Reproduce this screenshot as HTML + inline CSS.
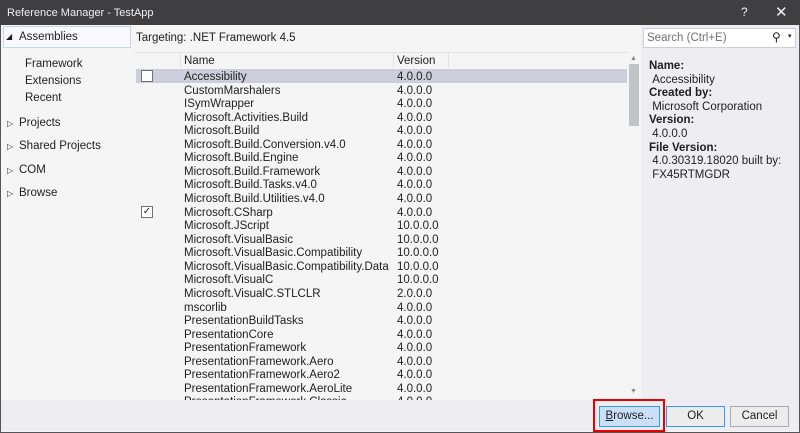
<!DOCTYPE html>
<html><head><style>
*{margin:0;padding:0;box-sizing:border-box}
body{width:800px;height:433px;overflow:hidden;background:#f5f5f5;font-family:"Liberation Sans",sans-serif;font-size:11.5px;color:#1e1e1e;position:relative}
.a{position:absolute;white-space:nowrap}
#title{left:0;top:0;width:800px;height:25px;background:#3f3f41;color:#f0f0f0;}
#frame{left:0;top:25px;width:800px;height:408px;border:1px solid #555;border-top:none}
.row{position:absolute;left:136px;width:492px;height:14px;line-height:14px}
.row .n{position:absolute;left:48px;top:1px}
.row .v{position:absolute;left:261px;top:1px}
</style></head><body>
<div class="a" id="title"><span class="a" style="left:7px;top:7px;font-size:11px">Reference Manager - TestApp</span>
<span class="a" style="left:741px;top:5px;font-size:12px">?</span>
<span class="a" style="left:775px;top:3px;font-size:15px">✕</span></div>
<div class="a" id="frame"></div>
<!-- left panel -->
<div class="a" style="left:3px;top:26px;width:128px;height:22px;border:1px solid #c6d6ea;background:#f7f9fc"></div>
<span class="a" style="left:6px;top:32px;font-size:8px">◢</span>
<span class="a" style="left:19px;top:31px">Assemblies</span>
<span class="a" style="left:25px;top:58px">Framework</span>
<span class="a" style="left:25px;top:75px">Extensions</span>
<span class="a" style="left:25px;top:92px">Recent</span>
<span class="a" style="left:7px;top:119px;font-size:8px">▷</span><span class="a" style="left:19px;top:117px">Projects</span>
<span class="a" style="left:7px;top:142px;font-size:8px">▷</span><span class="a" style="left:19px;top:140px">Shared Projects</span>
<span class="a" style="left:7px;top:166px;font-size:8px">▷</span><span class="a" style="left:19px;top:164px">COM</span>
<span class="a" style="left:7px;top:189px;font-size:8px">▷</span><span class="a" style="left:19px;top:187px">Browse</span>
<!-- middle -->
<span class="a" style="left:136px;top:32px">Targeting: .NET Framework 4.5</span>
<div class="a" style="left:135px;top:52px;width:493px;height:1px;background:#e2e2e2"></div>
<div class="a" style="left:180px;top:53px;width:1px;height:15px;background:#e2e2e2"></div>
<div class="a" style="left:393px;top:53px;width:1px;height:15px;background:#e2e2e2"></div>
<div class="a" style="left:448px;top:53px;width:1px;height:15px;background:#e2e2e2"></div>
<span class="a" style="left:184px;top:55px">Name</span>
<span class="a" style="left:397px;top:55px">Version</span>
<div class="a" style="left:136px;top:69px;width:491px;height:14px;background:#cccedb"></div>
<div class="a" style="left:141px;top:70px;width:12px;height:12px;border:1px solid #717171;background:#fff"></div>
<div class="a" style="left:141px;top:206px;width:12px;height:12px;border:1px solid #717171;background:#fff;font-size:10px;line-height:10px;text-align:center">✓</div>
<div id="rows"></div>
<!-- scrollbar -->
<span class="a" style="left:630px;top:55px;font-size:7px;color:#888">▲</span>
<div class="a" style="left:629px;top:64px;width:10px;height:62px;background:#c2c3c9"></div>
<span class="a" style="left:630px;top:388px;font-size:7px;color:#888">▼</span>
<!-- right -->
<div class="a" style="left:641px;top:25px;width:158px;height:375px;background:#eeeef2"></div>
<div class="a" style="left:643px;top:28px;width:153px;height:20px;background:#fff;border:1px solid #cccedb"></div>
<span class="a" style="left:647px;top:32px;color:#717171">Search (Ctrl+E)</span>
<span class="a" style="left:772px;top:30px;font-size:12px">⚲</span><span class="a" style="left:788px;top:32px;font-size:7px">▾</span>
<div class="a" style="left:649px;top:60px;line-height:13.6px">
<b>Name:</b><br>&nbsp;Accessibility<br><b>Created by:</b><br>&nbsp;Microsoft Corporation<br><b>Version:</b><br>&nbsp;4.0.0.0<br><b>File Version:</b><br>&nbsp;4.0.30319.18020 built by:<br>&nbsp;FX45RTMGDR</div>
<!-- footer -->
<div class="a" style="left:1px;top:400px;width:798px;height:31px;background:#eeeef2"></div>
<div class="a" style="left:593px;top:399px;width:72px;height:33px;border:2px solid #e00"></div>
<div class="a" style="left:599px;top:406px;width:61px;height:21px;background:#c9e0f7;border:1px solid #3399ff;text-align:center;line-height:19px"><u>B</u>rowse...</div>
<div class="a" style="left:666px;top:406px;width:59px;height:21px;background:#ececec;border:1px solid #3399ff;text-align:center;line-height:19px">OK</div>
<div class="a" style="left:730px;top:406px;width:59px;height:21px;background:#ececec;border:1px solid #acacac;text-align:center;line-height:19px">Cancel</div>
<script>
var d=[["Accessibility","4.0.0.0"],["CustomMarshalers","4.0.0.0"],["ISymWrapper","4.0.0.0"],["Microsoft.Activities.Build","4.0.0.0"],["Microsoft.Build","4.0.0.0"],["Microsoft.Build.Conversion.v4.0","4.0.0.0"],["Microsoft.Build.Engine","4.0.0.0"],["Microsoft.Build.Framework","4.0.0.0"],["Microsoft.Build.Tasks.v4.0","4.0.0.0"],["Microsoft.Build.Utilities.v4.0","4.0.0.0"],["Microsoft.CSharp","4.0.0.0"],["Microsoft.JScript","10.0.0.0"],["Microsoft.VisualBasic","10.0.0.0"],["Microsoft.VisualBasic.Compatibility","10.0.0.0"],["Microsoft.VisualBasic.Compatibility.Data","10.0.0.0"],["Microsoft.VisualC","10.0.0.0"],["Microsoft.VisualC.STLCLR","2.0.0.0"],["mscorlib","4.0.0.0"],["PresentationBuildTasks","4.0.0.0"],["PresentationCore","4.0.0.0"],["PresentationFramework","4.0.0.0"],["PresentationFramework.Aero","4.0.0.0"],["PresentationFramework.Aero2","4.0.0.0"],["PresentationFramework.AeroLite","4.0.0.0"]];
var h="";d.forEach(function(r,i){h+='<div class="row" style="top:'+(69+i*13.56)+'px"><span class="n">'+r[0]+'</span><span class="v">'+r[1]+'</span></div>'});
h+='<div class="row" style="top:394px;height:6px;overflow:hidden"><span class="n">PresentationFramework.Classic</span><span class="v">4.0.0.0</span></div>';
document.getElementById("rows").innerHTML=h;
</script>
</body></html>
